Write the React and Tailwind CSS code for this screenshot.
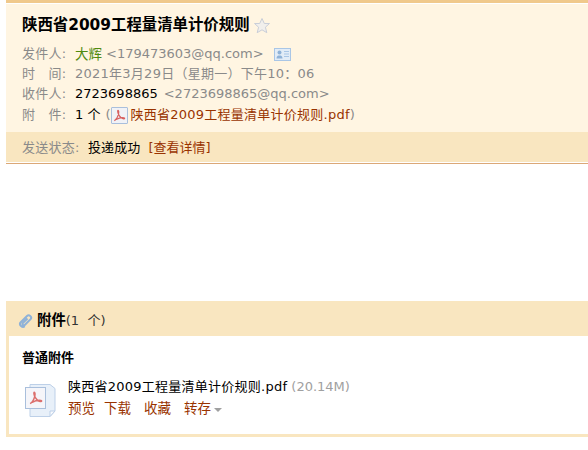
import React from "react";

const PDF_MARK =
  "M2.500 13.500c2.200-1.300 3.800-4.500 4.500-7.500.4-1.700.1-3.500-.5-3.500-.7 0-.6 2.500 1 5.200 1.300 2.200 3 3.700 5 3.800 1.200.1 1.300-.9.3-1.100-2.200-.4-6 .5-8.300 1.800";

const SmallPdfIcon = () => (
  <span className="inline-flex w-[17px] h-[17px] mx-[1px] border border-[#a9bfdc] bg-[#f1f2f6] rounded-[1px]">
    <svg viewBox="0 0 16 16" className="w-[15px] h-[15px]" fill="none">
      <path d={PDF_MARK} stroke="#d8605f" strokeWidth="1.300" />
    </svg>
  </span>
);

const BigPdfIcon = () => (
  <svg viewBox="0 0 34 36" className="w-[34px] h-[36px]" fill="none">
    <path d="M6 2.500h20l5 4v22.500l-5 5.500H6z" fill="#e8f0f9" stroke="#bdd0e8" />
    <path d="M26 34.500l5-5.500h-5z" fill="#f8fafd" stroke="#bdd0e8" />
    <rect x="1.500" y="5.500" width="20" height="21" fill="#f5f5f9" stroke="#a9bfdc" />
    <g transform="translate(3.500 7.500) scale(1.050)">
      <path d={PDF_MARK} stroke="#dc6f6d" strokeWidth="1.400" />
    </g>
  </svg>
);

const CardIcon = () => (
  <svg viewBox="0 0 17 13" className="ml-[10px] w-[17px] h-[13px]" fill="none">
    <rect x=".5" y=".5" width="16" height="12" fill="#e2ecf7" stroke="#a9c6e6" />
    <circle cx="5.500" cy="4.500" r="2" fill="#8fb2d8" />
    <path d="M2.500 10.500c0-2.500 1.500-3 3-3s3 .5 3 3z" fill="#8fb2d8" />
    <path d="M10 3.500h5M10 6h5M10 8.500h5" stroke="#a9c6e6" />
  </svg>
);

const MetaRow = ({ label, children, className = "" }) => (
  <div className={`flex h-[20px] items-center whitespace-nowrap ${className}`}>
    <span className="w-[53px] text-[#8a8a8a] tracking-[0.25px]">{label}</span>
    {children}
  </div>
);

const App = () => {
  return (
    <div className="w-[588px] h-[450px] overflow-hidden bg-white text-[13px] font-['DejaVu_Sans','Noto_Sans_CJK_SC',sans-serif]">
      <section className="ml-[6px]">
        <div className="h-[3px] bg-[#f0c98c]" />
        <div className="h-[1px] bg-white" />
        <div className="h-[128px] bg-[#fff5e2] pl-[16px]">
          <div className="flex h-[40px] items-center pt-[4px]">
            <h1 className="text-[15.4px] font-bold text-black whitespace-nowrap">陕西省2009工程量清单计价规则</h1>
            <svg viewBox="0 0 18 18" className="ml-[3px] w-[18px] h-[18px]">
              <path
                d="M9 1.500l2.300 5h5.200l-4.100 3.700 1.400 5.500L9 12.800l-4.800 2.900 1.400-5.500L1.500 6.500h5.200z"
                fill="#f1efec"
                stroke="#c9ced8"
              />
            </svg>
          </div>
          <div className="flex flex-col">
            <MetaRow label="发件人:">
              <span className="text-[13.5px] text-[#4f8a10]">大辉</span>
              <span className="ml-[4px] text-[#8a8a8a]">&lt;179473603@qq.com&gt;</span>
              <CardIcon />
            </MetaRow>
            <MetaRow label="时　间:">
              <span className="text-[#8a8a8a] tracking-[0.25px]">2021年3月29日（星期一）下午10：06</span>
            </MetaRow>
            <MetaRow label="收件人:">
              <span className="text-black">2723698865</span>
              <span className="ml-[6px] text-[#8a8a8a]">&lt;2723698865@qq.com&gt;</span>
            </MetaRow>
            <MetaRow label="附　件:" className="mt-[1px]">
              <span className="text-black">1 个</span>
              <span className="ml-[5px] text-[#8a8a8a]">(</span>
              <SmallPdfIcon />
              <span className="ml-[1px] text-[#993300] tracking-[0.25px]">陕西省2009工程量清单计价规则.pdf</span>
              <span className="text-[#8a8a8a]">)</span>
            </MetaRow>
          </div>
        </div>
        <div className="flex h-[30px] items-center bg-[#f9e6c0] pl-[16px] pt-[1px] whitespace-nowrap">
          <span className="w-[66px] text-[#8a8a8a] tracking-[0.25px]">发送状态:</span>
          <span className="text-black tracking-[0.1px]">投递成功</span>
          <span className="ml-[8px] text-[#993300]">[查看详情]</span>
        </div>
        <div className="h-[1px] bg-white" />
        <div className="h-[1px] bg-[#dba877]" />
      </section>

      <section className="mt-[137px] ml-[6px] border-l-[3px] border-b-[3px] border-[#f9e6c0]">
        <div className="-ml-[3px] flex h-[35px] items-center bg-[#f9e6c0] pl-[12px] pt-[4px]">
          <svg viewBox="0 0 16 16" className="w-[16px] h-[16px]" fill="none">
            <path
              d="M2.500 9.500l6.500-6.500c2-1.800 5.500.8 3.600 3.200L7 11.800c-1.300 1.300-3.200-.3-2.200-1.700L9.500 5.500M2.500 9.500c-1.800 2.200 1.800 6 4.200 3.800"
              stroke="#8fb2d8"
              strokeWidth="2"
            />
          </svg>
          <span className="ml-[3px] text-[14.4px] font-bold text-black">附件</span>
          <span className="text-[#333] whitespace-pre">(1  个)</span>
        </div>
        <div className="h-[98px] bg-white pl-[13px] pt-[12px]">
          <div className="text-[13px] font-bold text-black">普通附件</div>
          <div className="mt-[8px] flex">
            <div className="mt-[6px] ml-[2px]">
              <BigPdfIcon />
            </div>
            <div className="ml-[10px] flex flex-col whitespace-nowrap">
              <div className="h-[21px] leading-[21px]">
                <span className="text-black tracking-[0.25px]">陕西省2009工程量清单计价规则.pdf</span>
                <span className="ml-[4px] text-[#a0a0a0]">(20.14M)</span>
              </div>
              <div className="mt-[2px] flex h-[20px] items-center text-[#993300] text-[13.5px]">
                <span>预览</span>
                <span className="ml-[9px]">下载</span>
                <span className="ml-[13px]">收藏</span>
                <span className="ml-[13px]">转存</span>
                <span className="ml-[3px] mt-[2px] border-x-[4px] border-t-[4px] border-x-transparent border-t-[#a0a0a0]" />
              </div>
            </div>
          </div>
        </div>
      </section>
    </div>
  );
};

export default App;
